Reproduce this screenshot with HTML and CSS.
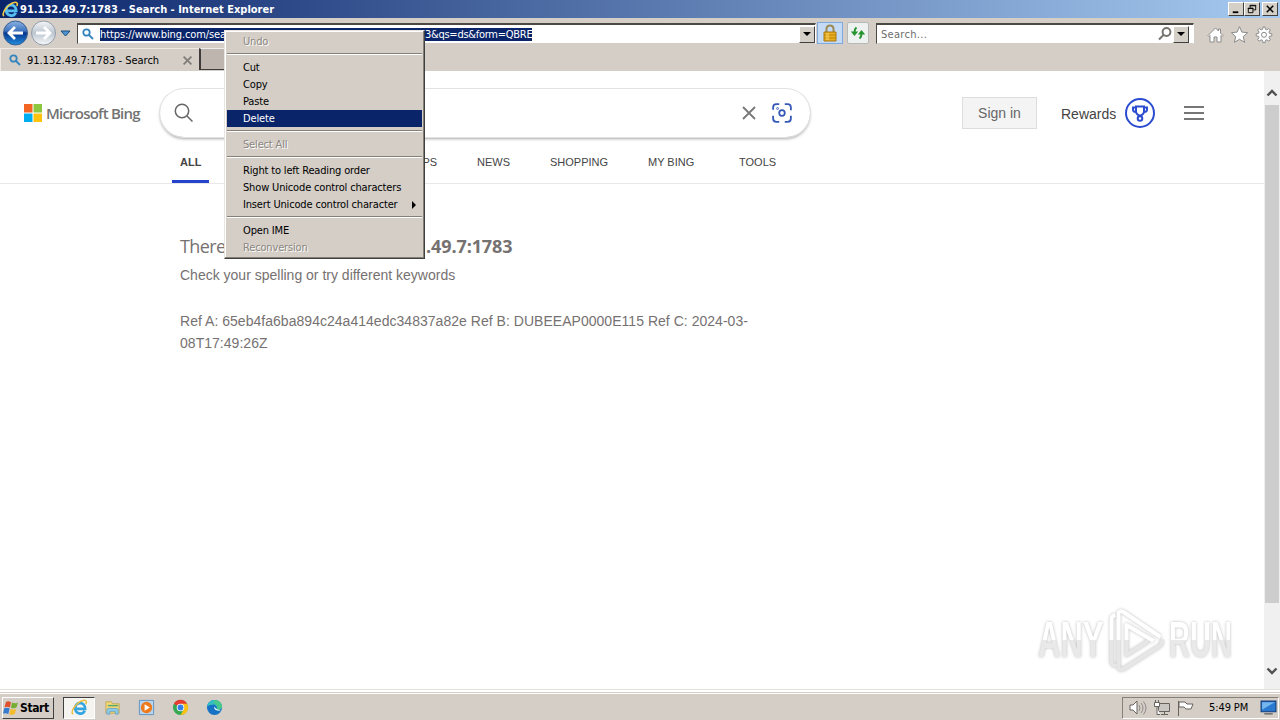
FILE: index.html
```
<!DOCTYPE html>
<html lang="en">
<head>
	<meta charset="UTF-8">
	<title>91.132.49.7:1783 - Search</title>
	<link rel="stylesheet" href="styles.css">
</head>
<body>
	<div class="screen">
		<div class="titlebar">
			<svg class="ie" viewBox="0 0 18 18"><path d="M4 10.500h11c0-8-10-8-10.500-1.300-.5 7 8 8 10 3.300" fill="none" stroke="#55bdf0" stroke-width="3"/><path d="M2 16C-1 13 6 3 13 1.500c4-.8 3.500 2.500 2.500 3.800" fill="none" stroke="#f3c944" stroke-width="1.700"/></svg>
			<span class="title">91.132.49.7:1783 - Search - Internet Explorer</span>
			<div class="winbtns">
				<div class="wbtn"><svg viewBox="0 0 15 13"><path d="M4 10h6" stroke="#000" stroke-width="2"/></svg></div>
				<div class="wbtn"><svg viewBox="0 0 15 13" fill="none" stroke="#000"><path d="M5.500 5V2.500h6v5H9M5 3h7M3.500 5.500h5v5h-5zM3 6h6"/></svg></div>
				<div class="wbtn close"><svg viewBox="0 0 15 13"><path d="M4 3l7 7M11 3l-7 7" stroke="#000" stroke-width="1.700"/></svg></div>
			</div>
		</div>
		<div class="toolbar">
			<svg class="nav-arrows" viewBox="0 0 77 30">
				<defs>
					<linearGradient id="back" x1="0" y1="0" x2="0" y2="1"><stop offset="0" stop-color="#8ab2e4"/><stop offset=".42" stop-color="#3d72bd"/><stop offset=".5" stop-color="#06368d"/><stop offset="1" stop-color="#238fe0"/></linearGradient>
					<linearGradient id="fwd" x1="0" y1="0" x2="0" y2="1"><stop offset="0" stop-color="#f4f6f8"/><stop offset=".5" stop-color="#bdc6d0"/><stop offset="1" stop-color="#f6f9fb"/></linearGradient>
				</defs>
				<circle cx="15.500" cy="15" r="12" fill="url(#back)" stroke="#3c5f91"/>
				<path d="M23 15H9.500M15 9l-6 6 6 6" fill="none" stroke="#fff" stroke-width="2.800"/>
				<circle cx="43.500" cy="15" r="12" fill="url(#fwd)" stroke="#929ca8"/>
				<path d="M36 15h13.500M44 9l6 6-6 6" fill="none" stroke="#fff" stroke-width="2.800"/>
				<path d="M61 13h9l-4.500 5z" fill="#4f94cf" stroke="#1c4c7c"/>
			</svg>
			<div class="address">
				<svg class="glass" viewBox="0 0 12 12"><circle cx="4.500" cy="4.500" r="3.200"/><path d="M7 7l4 4"/></svg>
				<div class="url"><span class="url-a">https://www.bing.com/search?q=91.132.49.7%3A1783</span><span class="url-b">3&amp;qs=ds&amp;form=QBRE</span></div>
				<div class="drop"></div>
			</div>
			<div class="tool lock"><svg viewBox="0 0 16 18"><path d="M4.500 9V5q0-3.500 3.500-3.500T11.500 5v4" fill="none" stroke="#9b8a55" stroke-width="2"/><path d="M2 8h12v9H2z" fill="#e9ae20" stroke="#a77710"/><path d="M2 11h12M2 14h12" stroke="#bd850c"/><path d="M4 9h3v7H4z" fill="#f9d76a" opacity=".5"/></svg></div>
			<div class="tool refresh"><svg viewBox="0 0 16 16"><path d="M6.500 2.500Q4.500 4 4.500 7M9.500 13.500q2-1.500 2-4.500" fill="none" stroke="#23942e" stroke-width="2"/><path d="M.8 6.500h7.400L4.500 11zM7.800 9.500h7.400L11.500 5z" fill="#23942e"/></svg></div>
			<div class="search">
				<span>Search...</span>
				<svg class="glass2" viewBox="0 0 14 14"><circle cx="8.500" cy="5" r="3.900"/><path d="M5.500 8L1 12.500"/></svg>
				<div class="drop"></div>
			</div>
			<svg class="cmds" viewBox="0 0 68 20" fill="#fff" stroke="#8b8b8b">
				<path d="M1 10.500L8.500 3l3 3V4h2v4l2.500 2.500-1 1-1-1V17h-4v-5H7v5H3v-6.500l-1 1z"/>
				<path d="M32.500 1.700l2.400 5.400 5.700.6-4.300 3.900 1.300 5.700-5.100-3-5.100 3 1.300-5.700-4.300-3.900 5.700-.6z"/>
				<path d="M56 2h2l.5 2.300 1.300.5 2-1.300 1.500 1.500-1.300 2 .5 1.300 2.300.5v2l-2.300.5-.5 1.300 1.300 2-1.500 1.500-2-1.300-1.300.5L58 17.600h-2l-.5-2.300-1.300-.5-2 1.300-1.500-1.500 1.300-2-.5-1.300-2.300-.5v-2l2.300-.5.5-1.300-1.300-2 1.500-1.500 2 1.300 1.300-.5z"/><circle cx="57" cy="9.800" r="2.500"/>
			</svg>
		</div>
		<div class="tabs">
			<div class="tab">
				<svg class="glass" viewBox="0 0 12 12"><circle cx="4.500" cy="4.500" r="3.200"/><path d="M7 7l4 4"/></svg>
				<span class="tab-title">91.132.49.7:1783 - Search</span>
				<svg class="tab-x" viewBox="0 0 8 8"><path d="M.5.500l7 7M7.500.500l-7 7" stroke="#817b76" stroke-width="1.500"/></svg>
			</div>
			<div class="newtab"></div>
		</div>
		<div class="content">
			<div class="page">
				<div class="head">
					<svg class="mslogo" viewBox="0 0 18 18"><path fill="#f26522" d="M0 0h8.500v8.500H0z"/><path fill="#8dc63f" d="M9.500 0H18v8.500H9.500z"/><path fill="#00aeef" d="M0 9.500h8.500V18H0z"/><path fill="#ffc20e" d="M9.500 9.500H18V18H9.500z"/></svg>
					<span class="brand">Microsoft Bing</span>
					<div class="sbox">
						<svg class="sb-glass" viewBox="0 0 20 20"><circle cx="8" cy="8" r="6.700"/><path d="M13 13l5.500 5.500"/></svg>
						<svg class="sb-x" viewBox="0 0 14 14"><path d="M1 1l12 12M13 1L1 13"/></svg>
						<svg class="sb-cam" viewBox="0 0 18 18"><path d="M1 6V4q0-3 3-3h2.500M11.500 1H14q3 0 3 3v2.500M17 11.500V14q0 3-3 3h-2.500M6.500 17H4q-3 0-3-3v-2.500"/><circle cx="9" cy="9" r="2.500"/><circle cx="5" cy="5" r=".3"/></svg>
					</div>
					<div class="signin">Sign in</div>
					<span class="rewards">Rewards</span>
					<svg class="medal" viewBox="0 0 30 30" fill="none" stroke="#2b4bd0" stroke-width="2"><circle cx="15" cy="15" r="14"/><path d="M11 8.500h8v5.500q0 2-4 4-4-2-4-4zM11 9.500H8v2q0 2.500 3 2.500M19 9.500h3v2q0 2.500-3 2.500"/><circle cx="15" cy="20.500" r="2.300"/></svg>
					<div class="burger"><i></i><i></i><i></i></div>
				</div>
				<div class="nav">
					<span class="all">ALL</span><span class="images">IMAGES</span><span class="videos">VIDEOS</span><span class="maps">MAPS</span><span class="news">NEWS</span><span class="shopping">SHOPPING</span><span class="mybing">MY BING</span><span class="tools">TOOLS</span>
				</div>
				<div class="results">
					<div class="none"><span class="none-a">There are no results for</span><b>91.132</b><b class="none-b">.49.7:1783</b></div>
					<p>Check your spelling or try different keywords</p>
					<p class="ref">Ref A: 65eb4fa6ba894c24a414edc34837a82e Ref B: DUBEEAP0000E115 Ref C: 2024-03-<br>08T17:49:26Z</p>
				</div>
			</div>
			<div class="scroll">
				<svg viewBox="0 0 16 16"><path d="M3.500 10.500L8 6l4.500 4.500"/></svg>
				<div class="thumb"></div>
				<svg viewBox="0 0 16 16"><path d="M3.500 5.500L8 10l4.500-4.500"/></svg>
			</div>
			<div class="watermark">
				<span class="wm-any">ANY</span>
				<svg viewBox="0 0 62 66" fill="none" stroke-width="4" stroke-linejoin="round"><path d="M12 33v26q0 5 5 3l36-23q4-3 1-6M5 33v22q0 3 5 4M20 33v15l22-14" stroke="#e6e6e6"/><path d="M12 33V7q0-4 5-2l37 25M5 33V12q0-3 4-4M20 33V18l27 16" stroke="#fff"/></svg>
				<span class="wm-run">RUN</span>
			</div>
		</div>
		<div class="taskbar">
			<div class="start">
				<svg viewBox="0 0 16 16"><path fill="#df512c" d="M3 2q2-1.500 5 .2L7 7.500Q4 6 1.500 7.200z"/><path fill="#76ad34" d="M9 2.600q3 1.400 6-.2l-1.500 5.200Q10.500 9 8 7.800z"/><path fill="#357bd0" d="M1.300 8.200Q4 7 6.700 8.500L5.300 14Q2.500 12.500 0 13.600z"/><path fill="#f4bc2b" d="M7.700 8.800q2.700 1.300 5.500.1L11.800 14q-2.800 1.300-5.500.2z"/></svg>
				<span>Start</span>
			</div>
			<div class="task active"><svg viewBox="0 0 18 18"><path d="M4 10.500h11c0-8-10-8-10.500-1.300-.5 7 8 8 10 3.300" fill="none" stroke="#35a5df" stroke-width="2.800"/><path d="M2 16C-1 13 6 3 13 1.500c4-.8 3.500 2.500 2.500 3.800" fill="none" stroke="#e8be3c" stroke-width="1.600"/></svg></div>
			<div class="task"><svg viewBox="0 0 18 18"><path d="M2 3h6l1 2h7v10H2z" fill="#f3d978" stroke="#c4a856"/><path d="M4 7h11" stroke="#5aa56d" stroke-width="1.500"/><path d="M3 16v-4q0-2 2-2h8q2 0 2 2v4h-3v-3H6v3z" fill="#8fcdec" stroke="#6aa5c5"/></svg></div>
			<div class="task"><svg viewBox="0 0 18 18"><path d="M1.500 1.500h15v15h-15z" fill="#b9d5ed" stroke="#5c93c6"/><circle cx="9" cy="9" r="6" fill="#ed7a1c"/><path d="M7 5.500v7L12.500 9z" fill="#fff"/></svg></div>
			<div class="task"><svg viewBox="0 0 18 18"><circle cx="9" cy="9" r="8" fill="#34a853"/><path d="M9 9L2 5a8 8 0 0 1 14 0z" fill="#e53c31"/><path d="M9 5h7a8 8 0 0 1-7 12l3.500-6z" fill="#fbc116"/><circle cx="9" cy="9" r="4" fill="#fff"/><circle cx="9" cy="9" r="3.100" fill="#347fe8"/></svg></div>
			<div class="task"><svg viewBox="0 0 18 18"><circle cx="9" cy="9" r="8" fill="#1672c5"/><path d="M1.200 8C2 3 6 1 9 1c5 0 8 3.500 8 7 0 3-3 4-6 3.500 2-3-1-6-4-5.500-3 0-5 1-5.800 2z" fill="#34bfc0"/><path d="M9 1c5 0 8 3.500 8 7 0 3-3 4-6 3.500 2-2 1-6-3-7z" fill="#54cd70" opacity=".65"/><path d="M9 8q-1 3 2 4t5-.5q-5 .5-7-3.500z" fill="#e6f5ff"/></svg></div>
			<div class="tray">
				<svg class="tray-icons" viewBox="0 0 66 18" fill="#fff" stroke="#66625e"><path d="M1 6h3l4-4v13l-4-4H1z"/><path d="M10 6q2 3 0 6M12 4q4 5 0 10M14.500 2.500q5 6.500 0 13" fill="none" stroke="#8f8b87"/><path d="M29.500 4.500h11v8h-11z" fill="#c9c6c1"/><path d="M32 15.500h7M35.500 13v2" fill="none"/><path d="M25.500 3.500h5v4h-5zM26.500 1v2M29.500 1v2M28 8v7.500h3" /><path d="M49.500 2v15M50 3h6l2 2h6l-2 5h-5l-2-2h-5z"/></svg>
				<span>5:49 PM</span>
				<svg class="desk" viewBox="0 0 16 14"><path d="M1 1h14v10H1z" fill="#2879cf" stroke="#153c78"/><path d="M2 2h12L2 9z" fill="#75b6ee"/><path d="M4 13h8" stroke="#444"/></svg>
			</div>
		</div>
		<div class="menu">
			<div class="item off">Undo</div>
			<hr>
			<div class="item">Cut</div>
			<div class="item">Copy</div>
			<div class="item">Paste</div>
			<div class="item on">Delete</div>
			<hr>
			<div class="item off">Select All</div>
			<hr>
			<div class="item">Right to left Reading order</div>
			<div class="item">Show Unicode control characters</div>
			<div class="item sub">Insert Unicode control character</div>
			<hr>
			<div class="item">Open IME</div>
			<div class="item off">Reconversion</div>
		</div>
	</div>
</body>
</html>
```
FILE: styles.css
```
*{
	box-sizing:border-box;
}
body{
	margin:0;
	font-family:"DejaVu Sans Condensed","DejaVu Sans",sans-serif;
	font-stretch:condensed;
	font-size:11px;
	color:#000;
}
svg{
	display:block;
	flex:none;
}
.screen{
	width:1280px;
	height:720px;
	position:relative;
	overflow:hidden;
	display:flex;
	flex-direction:column;
	background:#d4d0c8;
}
.titlebar{
	height:18px;
	flex:none;
	display:flex;
	align-items:center;
	padding:0 2px;
	color:#fff;
	background:linear-gradient(90deg,#0a246a,#a6caf0);
}
.ie{
	width:17px;
	height:17px;
	margin-right:1px;
}
.title{
	font-weight:bold;
	white-space:nowrap;
}
.winbtns{
	margin-left:auto;
	display:flex;
}
.wbtn{
	width:16px;
	height:14px;
	background:#d4d0c8;
	border:1px solid;
	border-color:#fff #404040 #404040 #fff;
}
.wbtn svg{
	width:14px;
	height:12px;
}
.close{
	margin-left:2px;
}
.toolbar{
	height:30px;
	flex:none;
	display:flex;
	align-items:flex-start;
	background:#d4cec7;
}
.nav-arrows{
	width:77px;
	height:30px;
}
.address,.search{
	height:21px;
	margin-top:5px;
	background:#fff;
	border:1px solid;
	border-top:2px solid #4c4843;
	border-color:#4c4843 #fff #d4cec7 #4c4843;
	display:flex;
	align-items:center;
}
.address{
	width:739px;
	padding-left:4px;
}
.glass{
	width:12px;
	height:12px;
	fill:none;
	stroke:#3384bd;
	stroke-width:1.8;
}
.url{
	display:flex;
	height:13px;
	line-height:13px;
	margin-left:6px;
	background:#0a246a;
	color:#fff;
	white-space:nowrap;
}
.url-a{
	width:325px;
	overflow:hidden;
	letter-spacing:-.1px;
}
.url-b{
	width:107px;
	letter-spacing:-.27px;
}
.drop{
	width:16px;
	height:17px;
	margin-left:auto;
	background:#d4d0c8;
	border:1px solid;
	border-color:#fff #404040 #404040 #fff;
	display:flex;
	align-items:center;
	justify-content:center;
}
.drop:before{
	content:'';
	border:4px solid transparent;
	border-top-color:#000;
	border-bottom:0;
}
.tool{
	height:22px;
	margin-top:4px;
	display:flex;
	align-items:center;
	justify-content:center;
}
.lock{
	width:26px;
	margin-left:1px;
	background:#c5daf5;
	border:1px solid #7eabdf;
}
.lock svg{
	width:16px;
	height:18px;
}
.refresh{
	width:22px;
	margin-left:4px;
	background:#edf1f0;
	border:1px solid #b7b8b8;
	border-radius:2px;
}
.refresh svg{
	width:16px;
	height:16px;
}
.search{
	width:318px;
	margin-left:7px;
	padding:0 4px;
	color:#6d6d6d;
}
.search span{
	letter-spacing:.3px;
}
.glass2{
	width:14px;
	height:14px;
	margin-left:auto;
	margin-right:1px;
	fill:none;
	stroke:#77746f;
	stroke-width:2;
}
.search .drop{
	margin-left:0;
}
.cmds{
	width:68px;
	height:20px;
	margin:7px 0 0 13px;
}
.tabs{
	height:23px;
	flex:none;
	display:flex;
	background:#d4cec7;
}
.tab{
	width:199px;
	display:flex;
	align-items:center;
	padding:0 7px 0 8px;
	border-left:1px solid #eeeae6;
	border-top:1px solid #eeeae6;
}
.tab-title{
	margin-left:6px;
	white-space:nowrap;
}
.tab-x{
	width:9px;
	height:9px;
	margin-left:auto;
}
.newtab{
	width:30px;
	height:22px;
	background:#bdb5ae;
	border-left:2px solid #3e3b38;
	border-bottom:1px solid #3e3b38;
	border-top:1px solid #eee;
}
.content{
	height:618px;
	flex:none;
	display:flex;
	position:relative;
	background:#fff;
}
.page{
	width:1264px;
	font-family:"Liberation Sans",sans-serif;
	font-stretch:normal;
}
.head{
	height:81px;
	display:flex;
	align-items:center;
	padding:3px 0 0 24px;
}
.mslogo{
	width:18px;
	height:18px;
}
.brand{
	width:95px;
	margin-left:4px;
	margin-right:19px;
	font:600 15px "Open Sans","Noto Sans",sans-serif;
	letter-spacing:-.78px;
	color:#737373;
	white-space:nowrap;
}
.sbox{
	width:650px;
	height:48px;
	border-radius:24px;
	box-shadow:0 0 0 1px #e2e2e2,0 2px 3px #aaa;
	display:flex;
	align-items:center;
	padding:0 18px 0 14px;
}
.sbox svg{
	fill:none;
	stroke:#666;
	stroke-width:1.5;
}
.sb-glass{
	width:20px;
	height:20px;
}
.sb-x{
	width:14px;
	height:14px;
	margin-left:auto;
	margin-right:16px;
}
.sbox .sb-x{
	stroke:#777;
	stroke-width:1.8;
}
.sbox .sb-cam{
	width:20px;
	height:20px;
	stroke:#3458b5;
	stroke-width:1.6;
}
.signin{
	width:75px;
	height:32px;
	line-height:31px;
	margin-left:152px;
	border:1px solid #ddd;
	background:#f4f4f4;
	color:#666;
	font-size:14px;
	text-align:center;
}
.rewards{
	width:56px;
	margin-left:24px;
	padding-top:2px;
	font-size:14px;
	color:#444;
}
.medal{
	width:30px;
	height:30px;
	margin-left:8px;
}
.burger{
	width:20px;
	height:14px;
	margin-left:29px;
	display:flex;
	flex-direction:column;
	justify-content:space-between;
}
.burger i{
	height:2px;
	background:#767676;
}
.nav{
	height:32px;
	display:flex;
	padding-left:172px;
	border-bottom:1px solid #e8e8e8;
	color:#444;
	line-height:21px;
}
.nav span{
	flex:none;
}
.nav .all{
	width:37px;
	padding-left:8px;
	font-weight:bold;
	border-bottom:3px solid #2444cc;
}
.images{
	width:89px;
	padding-left:31px;
}
.videos{
	width:82px;
	padding-left:31px;
}
.maps{
	width:97px;
	padding-left:26px;
}
.news{
	width:73px;
}
.shopping{
	width:98px;
}
.mybing{
	width:91px;
}
.results{
	padding:49px 0 0 180px;
	color:#767171;
	font-size:14px;
}
.none{
	display:flex;
	height:26px;
	line-height:26px;
	font-family:"Open Sans","Noto Sans",sans-serif;
	font-size:18px;
	letter-spacing:-.35px;
	white-space:nowrap;
}
.none-a{
	width:190px;
	letter-spacing:-.6px;
}
.none b{
	width:56px;
	letter-spacing:-1px;
}
.none .none-b{
	width:100px;
	letter-spacing:-.1px;
}
.results p{
	margin:5px 0 0;
	line-height:22px;
}
.results .ref{
	margin-top:24px;
	letter-spacing:.03px;
}
.scroll{
	width:16px;
	background:#f0f0f0;
	padding:14px 0 9px;
}
.scroll svg{
	width:16px;
	height:16px;
	fill:none;
	stroke:#505050;
	stroke-width:2.4;
}
.thumb{
	height:498px;
	margin:4px 1px 60px;
	background:#cdcdcd;
}
.watermark{
	position:absolute;
	left:1038px;
	top:536px;
	height:66px;
	display:flex;
	align-items:center;
	filter:drop-shadow(0 0 1.5px #bbb);
}
.watermark span{
	flex:none;
	width:112px;
	font:bold 50px "Liberation Sans",sans-serif;
	line-height:70px;
	color:transparent;
	background:linear-gradient(#fff 50%,#e9e9e9 50%);
	-webkit-background-clip:text;
	background-clip:text;
	white-space:nowrap;
	transform-origin:left center;
}
.watermark .wm-any{
	margin-right:-44px;
	transform:scaleX(.62);
}
.watermark svg{
	width:63px;
	height:66px;
}
.watermark .wm-run{
	transform:scaleX(.58);
}
.taskbar{
	height:31px;
	flex:none;
	display:flex;
	align-items:center;
	padding:6px 0 0 2px;
	background:linear-gradient(#e4e1dc 1px,#fff 1px,#fff 3px,#d4cec7 3px,#d4cec7 4px,#fff 4px,#fff 5px,#d4cec7 5px);
}
.start{
	width:52px;
	height:22px;
	margin-right:9px;
	border:1px solid;
	border-color:#fff #404040 #404040 #fff;
	display:flex;
	align-items:center;
	font-weight:bold;
	font-size:12px;
}
.start svg{
	width:16px;
	height:16px;
}
.start span{
	margin-left:1px;
	letter-spacing:-.4px;
}
.task{
	width:34px;
	height:22px;
	display:flex;
	align-items:center;
	justify-content:center;
}
.task svg{
	width:17px;
	height:17px;
}
.active{
	width:32px;
	background:#f6f4f1;
	border:1px solid;
	border-color:#404040 #fff #fff #404040;
}
.tray{
	width:157px;
	height:22px;
	margin-left:auto;
	margin-right:1px;
	border:1px solid;
	border-color:#858078 #fff #fff #858078;
	display:flex;
	align-items:center;
	padding-left:6px;
}
.tray-icons{
	width:66px;
	height:18px;
}
.tray span{
	margin-left:14px;
	width:47px;
	letter-spacing:-.1px;
	white-space:nowrap;
}
.desk{
	width:17px;
	height:15px;
	margin-left:4px;
}
.menu{
	position:absolute;
	left:224px;
	top:30px;
	width:201px;
	height:229px;
	padding:2px 1px;
	background:#d4cec7;
	border:1px solid;
	border-color:#e8e4df #404040 #404040 #e8e4df;
	box-shadow:inset -1px -1px #858078,inset 1px 1px #fff;
}
.item{
	height:17px;
	line-height:17px;
	padding-left:16px;
	margin:0 1px;
	letter-spacing:-.16px;
	white-space:nowrap;
}
.off{
	color:#8b8680;
	text-shadow:1px 1px #fff;
}
.on{
	background:#0a246a;
	color:#fff;
}
.sub{
	display:flex;
	align-items:center;
}
.sub:after{
	content:'';
	border:4px solid transparent;
	border-left-color:#000;
	border-right:0;
	margin-left:auto;
	margin-right:6px;
}
.menu hr{
	height:2px;
	margin:3px 1px 4px;
	border:0;
	border-top:1px solid #858078;
	border-bottom:1px solid #fff;
}
```
